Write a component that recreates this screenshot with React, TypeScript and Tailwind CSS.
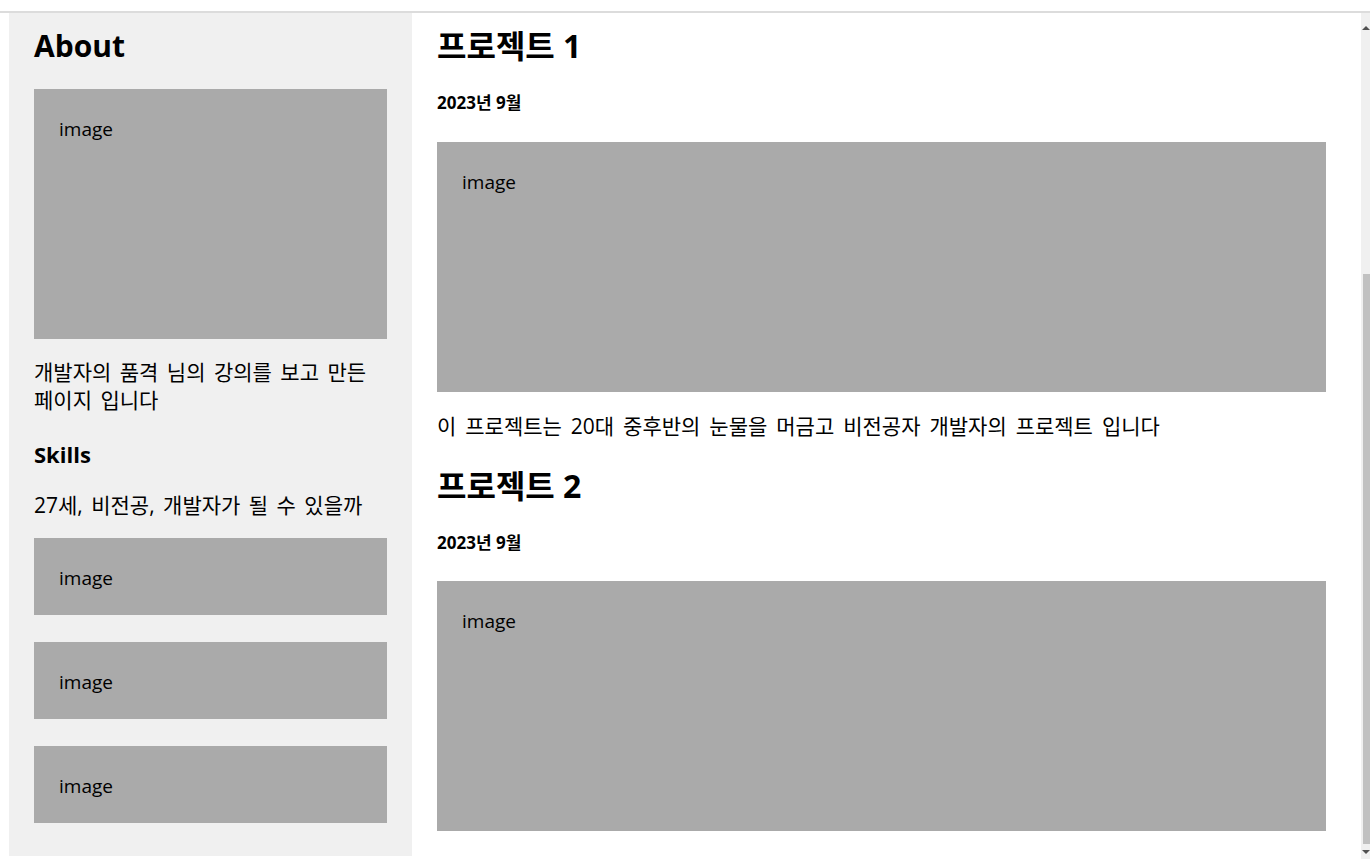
import React from 'react';

const font = { fontFamily: '"Open Sans", "Noto Sans CJK KR", sans-serif' };

const ImageBox: React.FC<{ className: string }> = ({ className }) => (
  <div className={`bg-[#aaaaaa] px-[25px] pt-[26px] text-[19px] leading-[28px] text-black ${className}`}>
    image
  </div>
);

const Project: React.FC<{ title: string; first?: boolean }> = ({ title, first }) => (
  <section>
    <h2 className={`${first ? 'mt-[15px]' : 'mt-[28px]'} text-[32px] font-bold leading-[36px]`}>{title}</h2>
    <p className="mt-[28px] text-[17px] font-bold leading-[22px]">2023년 9월</p>
    <ImageBox className={`${first ? 'mt-[28px]' : 'mt-[27px]'} h-[250px]`} />
  </section>
);

const Scrollbar: React.FC = () => (
  <div className="flex w-[9px] shrink-0 flex-col bg-[#f0f0f0]">
    <div className="flex h-[17px] items-end justify-end">
      <div className="h-0 w-0 border-b-[4px] border-l-[4px] border-r-[4px] border-b-[#505050] border-l-transparent border-r-transparent" />
    </div>
    <div className="ml-[2px] mt-[244px] h-[570px] bg-[#c1c1c1]" />
    <div className="flex flex-1 items-start justify-end pt-[6px]">
      <div className="h-0 w-0 border-t-[4px] border-l-[4px] border-r-[4px] border-t-[#505050] border-l-transparent border-r-transparent" />
    </div>
  </div>
);

export default function App() {
  return (
    <div className="flex h-[859px] flex-col overflow-hidden bg-white text-black" style={font}>
      <div className="h-[11px] shrink-0" />
      <div className="h-[2px] shrink-0 bg-[#dcdcdc]" />
      <div className="flex min-h-0 flex-1">
        <div className="flex min-w-0 flex-1 pl-[9px]">
          <aside className="mb-[3px] w-[403px] shrink-0 bg-[#f0f0f0] px-[25px] pt-[15px]">
            <h2 className="text-[30px] font-bold leading-[36px]">About</h2>
            <ImageBox className="mt-[25px] h-[250px]" />
            <p className="mt-[19px] break-keep text-[21px] leading-[28px] [word-spacing:3px]">
              개발자의 품격 님의 강의를 보고 만든 페이지 입니다
            </p>
            <h3 className="mt-[25px] text-[22px] font-bold leading-[30px]">Skills</h3>
            <p className="mt-[22px] break-keep text-[21px] leading-[28px] [word-spacing:3px]">
              27세, 비전공, 개발자가 될 수 있을까
            </p>
            <div className="mt-[19px] flex flex-col gap-[27px]">
              <ImageBox className="h-[77px]" />
              <ImageBox className="h-[77px]" />
              <ImageBox className="h-[77px]" />
            </div>
          </aside>
          <main className="min-w-0 flex-1 pl-[25px] pr-[35px]">
            <Project title="프로젝트 1" first />
            <p className="mt-[20px] break-keep text-[21px] leading-[28px] [word-spacing:3.5px]">
              이 프로젝트는 20대 중후반의 눈물을 머금고 비전공자 개발자의 프로젝트 입니다
            </p>
            <Project title="프로젝트 2" />
          </main>
        </div>
        <Scrollbar />
      </div>
    </div>
  );
}
